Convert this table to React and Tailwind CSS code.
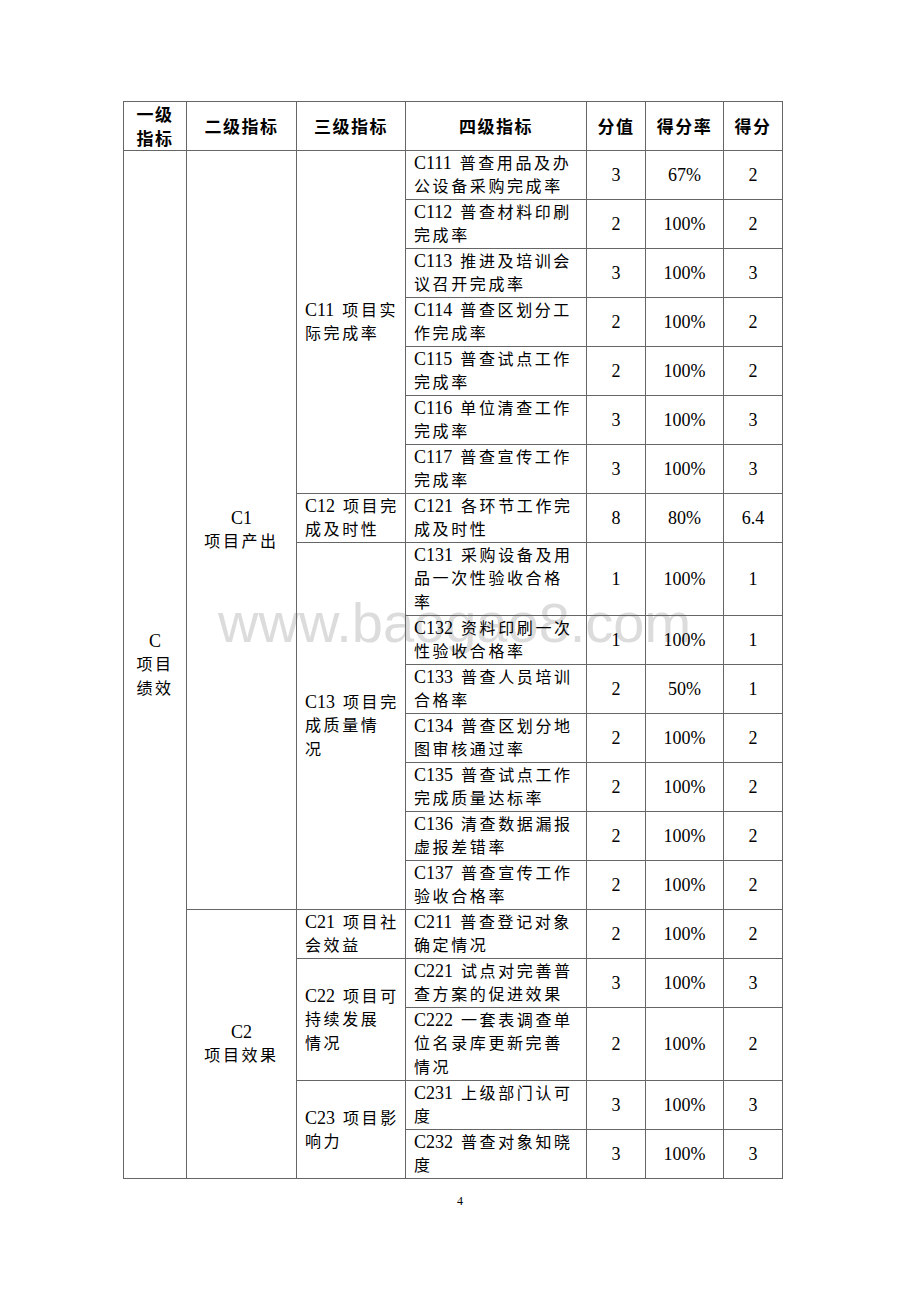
import React from "react";

const SPLIT = /( |[\u3400-\u9fff]+)/;
const CJK = /^[\u3400-\u9fff]+$/;

function Line({ text }) {
  const parts = text.split(SPLIT).filter((p) => p !== "");
  return (
    <div className="h-[24px] whitespace-nowrap leading-[24px]">
      {parts.map((p, i) => {
        if (p === " ") return <span key={i} className="inline-block w-[8px]" />;
        if (CJK.test(p))
          return (
            <span key={i} className="text-[16px] tracking-[2.6px]">
              {p}
            </span>
          );
        return (
          <span key={i} className="text-[18px]">
            {p}
          </span>
        );
      })}
    </div>
  );
}

const data = [
  {
    l2: ["C1", "项目产出"],
    groups: [
      {
        l3: ["C11 项目实", "际完成率"],
        rows: [
          { t: ["C111 普查用品及办", "公设备采购完成率"], v: "3", r: "67%", s: "2" },
          { t: ["C112 普查材料印刷", "完成率"], v: "2", r: "100%", s: "2" },
          { t: ["C113 推进及培训会", "议召开完成率"], v: "3", r: "100%", s: "3" },
          { t: ["C114 普查区划分工", "作完成率"], v: "2", r: "100%", s: "2" },
          { t: ["C115 普查试点工作", "完成率"], v: "2", r: "100%", s: "2" },
          { t: ["C116 单位清查工作", "完成率"], v: "3", r: "100%", s: "3" },
          { t: ["C117 普查宣传工作", "完成率"], v: "3", r: "100%", s: "3" },
        ],
      },
      {
        l3: ["C12 项目完", "成及时性"],
        rows: [{ t: ["C121 各环节工作完", "成及时性"], v: "8", r: "80%", s: "6.4" }],
      },
      {
        l3: ["C13 项目完", "成质量情", "况"],
        rows: [
          { t: ["C131 采购设备及用", "品一次性验收合格", "率"], v: "1", r: "100%", s: "1" },
          { t: ["C132 资料印刷一次", "性验收合格率"], v: "1", r: "100%", s: "1" },
          { t: ["C133 普查人员培训", "合格率"], v: "2", r: "50%", s: "1" },
          { t: ["C134 普查区划分地", "图审核通过率"], v: "2", r: "100%", s: "2" },
          { t: ["C135 普查试点工作", "完成质量达标率"], v: "2", r: "100%", s: "2" },
          { t: ["C136 清查数据漏报", "虚报差错率"], v: "2", r: "100%", s: "2" },
          { t: ["C137 普查宣传工作", "验收合格率"], v: "2", r: "100%", s: "2" },
        ],
      },
    ],
  },
  {
    l2: ["C2", "项目效果"],
    groups: [
      {
        l3: ["C21 项目社", "会效益"],
        rows: [{ t: ["C211 普查登记对象", "确定情况"], v: "2", r: "100%", s: "2" }],
      },
      {
        l3: ["C22 项目可", "持续发展", "情况"],
        rows: [
          { t: ["C221 试点对完善普", "查方案的促进效果"], v: "3", r: "100%", s: "3" },
          { t: ["C222 一套表调查单", "位名录库更新完善", "情况"], v: "2", r: "100%", s: "2" },
        ],
      },
      {
        l3: ["C23 项目影", "响力"],
        rows: [
          { t: ["C231 上级部门认可", "度"], v: "3", r: "100%", s: "3" },
          { t: ["C232 普查对象知晓", "度"], v: "3", r: "100%", s: "3" },
        ],
      },
    ],
  },
];

const B = "border-r border-b border-[#666]";

function Num({ children, w }) {
  return (
    <div className={`${B} ${w} flex items-center justify-center text-[18px] leading-[24px]`}>{children}</div>
  );
}

function DataRow({ row }) {
  const h = row.t.length === 3 ? "h-[73px]" : "h-[49px]";
  return (
    <div className={`flex ${h}`}>
      <div className={`${B} w-[181px] flex flex-col justify-center pl-[8px]`}>
        {row.t.map((l, i) => (
          <Line key={i} text={l} />
        ))}
      </div>
      <Num w="w-[59px]">{row.v}</Num>
      <Num w="w-[78px]">{row.r}</Num>
      <Num w="w-[59px]">{row.s}</Num>
    </div>
  );
}

function Head({ w, children }) {
  return (
    <div
      className={`${B} ${w} flex flex-col items-center justify-center font-['Noto_Sans_CJK_SC',sans-serif] font-bold text-[17px] tracking-[1.5px] leading-[24px]`}
    >
      {children}
    </div>
  );
}

export default function App() {
  return (
    <div className="relative w-[920px] h-[1302px] bg-white pt-[101px] pl-[123px] text-black font-['Liberation_Serif','Noto_Sans_CJK_SC',serif]">
      <div className="absolute left-[218px] top-[595px] font-['Liberation_Sans',sans-serif] text-[56px] leading-none text-[#dcdcdc] whitespace-nowrap pointer-events-none select-none">
        www.baogao8.com
      </div>
      <div className="relative w-[660px] border-t border-l border-[#666]">
        <div className="flex h-[49px]">
          <Head w="w-[63px]">
            <div className="h-[24px]">一级</div>
            <div className="h-[24px]">指标</div>
          </Head>
          <Head w="w-[110px]">二级指标</Head>
          <Head w="w-[109px]">三级指标</Head>
          <Head w="w-[181px]">四级指标</Head>
          <Head w="w-[59px]">分值</Head>
          <Head w="w-[78px]">得分率</Head>
          <Head w="w-[59px]">得分</Head>
        </div>
        <div className="flex">
          <div className={`${B} w-[63px] flex flex-col items-center justify-center`}>
            <Line text="C" />
            <Line text="项目" />
            <Line text="绩效" />
          </div>
          <div className="flex flex-col">
            {data.map((g2, i) => (
              <div key={i} className="flex">
                <div className={`${B} w-[110px] flex flex-col items-center justify-center`}>
                  {g2.l2.map((l, k) => (
                    <Line key={k} text={l} />
                  ))}
                </div>
                <div className="flex flex-col">
                  {g2.groups.map((g3, j) => (
                    <div key={j} className="flex">
                      <div className={`${B} w-[109px] flex flex-col justify-center pl-[8px]`}>
                        {g3.l3.map((l, k) => (
                          <Line key={k} text={l} />
                        ))}
                      </div>
                      <div className="flex flex-col">
                        {g3.rows.map((r, k) => (
                          <DataRow key={k} row={r} />
                        ))}
                      </div>
                    </div>
                  ))}
                </div>
              </div>
            ))}
          </div>
        </div>
      </div>
      <div className="w-[674px] mt-[14px] text-center text-[12px] leading-[16px] font-['Liberation_Serif',serif]">
        4
      </div>
    </div>
  );
}
